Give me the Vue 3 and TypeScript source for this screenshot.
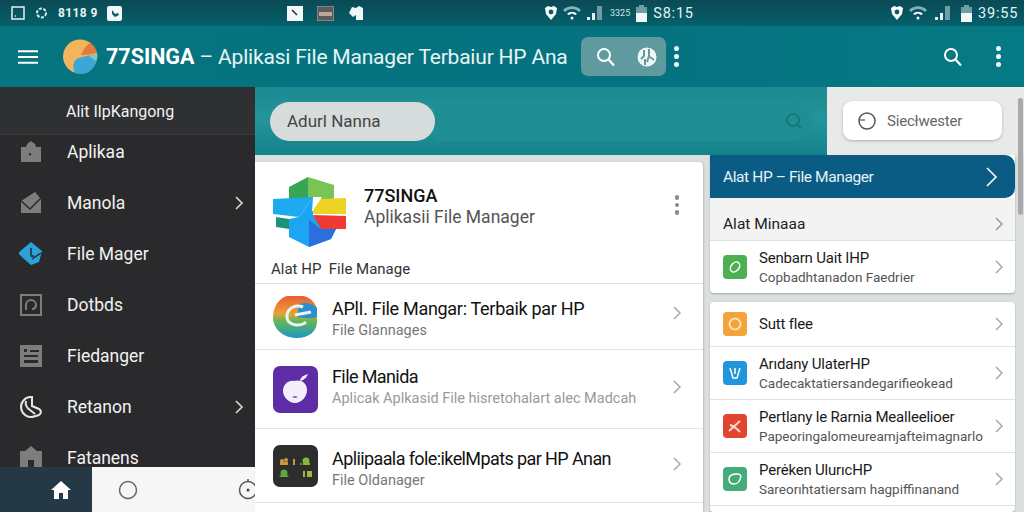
<script setup lang="ts">
interface NavItem { label: string; d: string; cut?: string; color?: string; arrow?: boolean; outline?: boolean; }
interface Row { title: string; sub?: string; color: string; }

const navItems: NavItem[] = [
  { label: 'Aplikaa', d: 'M2 7h5l1-3 4-3 4 3 1 3h5v15H2z M11 13a1.200 1.200 0 1 0 .1 0z' },
  { label: 'Manola', d: 'M2 10 16 1l6 7v14H2z', cut: 'M1 9l10 9L23 6', arrow: true },
  { label: 'File Mager', d: 'M12 0l11 9-3 11-8 3-7-6-6-6z', cut: 'M12 6v8h3M13 17l9-6', color: '#2aa3d8' },
  { label: 'Dotbds', d: 'M1 1h22v22H1z M3 3v18h18V3z M12 6a6 6 0 0 0-6 6v5h2v-5a4 4 0 0 1 8 0c0 2-2 3-3 3v2c3 0 5-2 5-5a6 6 0 0 0-6-6z' },
  { label: 'Fiedanger', d: 'M1 1h22v22H1z M5 5v3h3V5z M11 6v2h9V6z M5 11v2h14v-2z M5 16v3h14v-3z' },
  { label: 'Retanon', d: 'M11 2a10 10 0 1 0 4 19.500l5-1.500c3-2 2-5 0-6l-7-3V2z M7 6c-1 4 1 7 4 9l5 4', color: '#e6e6e6', arrow: true, outline: true },
  { label: 'Fatanens', d: 'M12 0l6 5h5v19H1V5h5z M9 14v10h6V14z' }
];

const mainRows = [
  { title: 'APlI. File Mangar: Terbaik par HP', sub: 'File Glannages', cls: 'row-a' },
  { title: 'File Manida', sub: 'Aplicak Aplkasid File hisretohalart alec Madcah', cls: 'row-b' },
  { title: 'Apliipaala fole:ikelMpats par HP Anan', sub: 'File Oldanager', cls: 'row-c' }
];

const sideTop: Row[] = [
  { title: 'Senbarn Uait IHP', sub: 'Copbadhtanadon Faedrier', color: '#4caf50' }
];
const sideRows: Row[] = [
  { title: 'Sutt flee', color: '#f2a43a' },
  { title: 'Arıdany UlaterHP', sub: 'Cadecaktatiersandegarifieokead', color: '#2196dc' },
  { title: 'Pertlany le Rarnia Mealleelioer', sub: 'Papeoringalomeureamjafteimagnarlo', color: '#e2452f' },
  { title: 'Perėken UlurıcHP', sub: 'Sareorıhtatiersam hagpiffinanand', color: '#45ab78' }
];
</script>

<template>
  <div class="screen">
    <div class="status">
      <div class="st-group st-left">
        <svg width="14" height="14" viewBox="0 0 14 14"><path d="M1 1h12v12H1z M4 10h1" fill="none" stroke="#e6f2f2" stroke-width="1.5"/></svg>
        <svg width="15" height="14" viewBox="0 0 15 14"><circle cx="7.5" cy="7" r="4.5" fill="none" stroke="#d9ecec" stroke-width="2" stroke-dasharray="3 1.5"/></svg>
        <span class="st-text st-narrow">8118 9</span>
        <svg width="15" height="15" viewBox="0 0 15 15"><rect width="15" height="15" rx="2" fill="#eef6f6"/><path d="M5 4v4l3 3 4-2-1-2-3 1z" fill="#0b5b66"/></svg>
      </div>
      <div class="st-group st-center">
        <svg width="16" height="15" viewBox="0 0 16 15"><rect width="16" height="15" fill="#f2f7f7"/><path d="M5 4l5 5" stroke="#333" stroke-width="1.6"/></svg>
        <svg width="17" height="15" viewBox="0 0 17 15"><rect width="17" height="15" fill="#5b5b5b" stroke="#aaa"/><rect x="2" y="6" width="13" height="4" fill="#b9a79f"/></svg>
        <svg width="16" height="16" viewBox="0 0 16 16"><path d="M1 8 4 2l4 1 3-2 4 2v12H8V10l-3 2z" fill="#eef6f6"/></svg>
      </div>
      <div class="st-group st-right1">
        <svg class="alarm" width="12" height="14" viewBox="0 0 12 14"><path d="M0 2l3-2 3 1 3-1 3 2-1 6-5 6-5-6z" fill="#fff"/><circle cx="6" cy="6" r="2.4" fill="#0b5b66"/></svg>
        <svg width="18" height="14" viewBox="0 0 18 14"><path d="M0 4c5-5 13-5 18 0l-2 2C12 2 6 2 2 6z" fill="#7fb4b8"/><path d="M4 8c3-3 7-3 10 0l-2 1c-2-2-4-2-6 0z" fill="#fff"/><circle cx="9" cy="12" r="1.5" fill="#fff"/></svg>
        <svg width="16" height="14" viewBox="0 0 16 14"><path d="M0 14h3v-3H0z M5 14h3V7H5z" fill="#e6f2f2"/><path d="M10 14h5V0h-5z" fill="#6d9ea3"/></svg>
        <span class="st-tiny">3325</span>
        <svg width="11" height="17" viewBox="0 0 11 17"><path d="M3 0h5v2h3v6H0V2h3z" fill="#6d9ea3"/><path d="M0 8h11v9H0z" fill="#f2f7f7"/></svg>
        <span class="st-text st-clock">S8:15</span>
      </div>
      <div class="st-group st-right2">
        <svg class="alarm" width="12" height="14" viewBox="0 0 12 14"><path d="M0 2l3-2 3 1 3-1 3 2-1 6-5 6-5-6z" fill="#fff"/><circle cx="6" cy="6" r="2.4" fill="#0b5b66"/></svg>
        <svg width="18" height="14" viewBox="0 0 18 14"><path d="M0 4c5-5 13-5 18 0l-2 2C12 2 6 2 2 6z" fill="#7fb4b8"/><path d="M4 8c3-3 7-3 10 0l-2 1c-2-2-4-2-6 0z" fill="#fff"/><circle cx="9" cy="12" r="1.5" fill="#fff"/></svg>
        <svg class="sig2" width="16" height="14" viewBox="0 0 16 14"><path d="M0 14h3v-3H0z M5 14h3V7H5z" fill="#e6f2f2"/><path d="M10 14h5V0h-5z" fill="#6d9ea3"/></svg>
        <svg class="bat2" width="11" height="17" viewBox="0 0 11 17"><path d="M3 0h5v2h3v6H0V2h3z" fill="#6d9ea3"/><path d="M0 8h11v9H0z" fill="#f2f7f7"/></svg>
        <span class="st-text st-clock">39:55</span>
      </div>
    </div>

    <header class="appbar">
      <svg class="burger" width="20" height="14" viewBox="0 0 20 14"><path d="M0 1.2h20M0 7h20M0 12.8h20" stroke="#fff" stroke-width="2"/></svg>
      <svg class="brand" width="35" height="35" viewBox="0 0 35 35">
        <circle cx="17" cy="17.500" r="17" fill="#f2b45c"/>
        <path d="M12 34c-3-6-2-13 4-15 6-2 12-3 18-4 1 9-5 20-16 20z" fill="#3aa7d6"/>
        <path d="M18 16c2-5 6-10 9-12 4 2 6 6 7 10-5 1-11 2-16 2z" fill="#e4793a"/>
        <path d="M26 17l8-3c1 3 0 6-1 8z" fill="#86c8b5"/>
      </svg>
      <h1 class="app-title"><b>77SINGA</b> – Aplikasi File Manager Terbaiur HP Ana</h1>
      <div class="chip">
        <svg width="20" height="20" viewBox="0 0 20 20"><circle cx="8" cy="8" r="6" fill="none" stroke="#fff" stroke-width="2"/><path d="M12.500 12.500 18 18.500" stroke="#fff" stroke-width="2.200"/></svg>
        <svg width="20" height="20" viewBox="0 0 20 20"><circle cx="10" cy="10" r="9.500" fill="#f2f7f7"/><path d="M7 3v6l-3 3M12 2v7l-2 6M13 10l4 3M8 12v6" stroke="#5f9a9f" stroke-width="2" fill="none"/></svg>
      </div>
      <span class="dots dots-a"><i></i><i></i><i></i></span>
      <svg class="search-b" width="20" height="20" viewBox="0 0 20 20"><circle cx="8" cy="8" r="6" fill="none" stroke="#fff" stroke-width="2"/><path d="M12.500 12.500 18 18.500" stroke="#fff" stroke-width="2.200"/></svg>
      <span class="dots dots-b"><i></i><i></i><i></i></span>
    </header>

    <div class="body">
      <aside class="sidebar">
        <div class="side-head">Alit IlpKangong</div>
        <ul class="side-list">
          <li v-for="n in navItems" :key="n.label" class="side-item">
            <svg width="24" height="24" viewBox="0 0 24 24">
              <path v-if="n.outline" :d="n.d" fill="none" :stroke="n.color" stroke-width="2"/>
              <path v-else :d="n.d" :fill="n.color || '#7d7d7d'" fill-rule="evenodd"/>
              <path v-if="n.cut" :d="n.cut" fill="none" stroke="#2a2a2c" stroke-width="1.500"/>
            </svg>
            <span class="side-label">{{ n.label }}</span>
            <svg v-if="n.arrow" class="side-arrow" width="9" height="14" viewBox="0 0 9 14"><path d="M1 1l6 6-6 6" fill="none" stroke="#d5d5d5" stroke-width="1.700"/></svg>
          </li>
        </ul>
        <nav class="tabs">
          <div class="tab-home">
            <svg width="20" height="18" viewBox="0 0 20 18"><path d="M10 0 20 9h-3v9h-5v-6H8v6H3V9H0z" fill="#fff"/></svg>
          </div>
          <div class="tab-rest">
            <svg class="tab-circle" width="20" height="20" viewBox="0 0 20 20"><circle cx="10" cy="10" r="8.500" fill="none" stroke="#666" stroke-width="1.500"/></svg>
            <svg class="tab-timer" width="17" height="22" viewBox="0 0 17 22"><circle cx="10" cy="12" r="8.500" fill="none" stroke="#555" stroke-width="1.500"/><circle cx="10" cy="12" r="1.500" fill="#444"/><path d="M10 1v3" stroke="#555" stroke-width="1.500"/></svg>
          </div>
        </nav>
      </aside>

      <main class="content">
        <div class="topband">
          <div class="teal">
            <div class="pill">Adurl Nanna</div>
            <div class="ghost-search">
              <svg width="18" height="18" viewBox="0 0 18 18"><circle cx="8" cy="8" r="6" fill="none" stroke="#17757b" stroke-width="2"/><path d="M12.500 12.500 16 16" stroke="#17757b" stroke-width="2"/></svg>
            </div>
          </div>
          <div class="greyband">
            <div class="sel-card">
              <svg width="20" height="20" viewBox="0 0 20 20"><circle cx="10" cy="10" r="8" fill="none" stroke="#555" stroke-width="1.500"/><path d="M3 9h5" stroke="#555" stroke-width="1.200"/></svg>
              <span>Siecłwester</span>
            </div>
          </div>
        </div>

        <div class="columns">
          <section class="list-col">
            <div class="hero">
              <div class="hero-top">
                <svg class="hero-logo" width="75" height="70" viewBox="0 0 75 70">
                  <path d="M17 10 36 0v22H17z" fill="#37a556"/>
                  <path d="M36 0l26 8v14H36z" fill="#78c455"/>
                  <path d="M4 40l13 2v10L4 50z" fill="#1a9378"/>
                  <path d="M1 22l40-2-14 20L1 37z" fill="#1eaaf0"/>
                  <path d="M47 22l27-1v16H39z" fill="#ecd324"/>
                  <path d="M41 38l33 1v13H47z" fill="#ef3a34"/>
                  <path d="M17 42l10-2 14-20v18l8 14h15l-5 10-22 8-20-10z" fill="#1ca5f2"/>
                  <path d="M37 43l12 9h15l-5 10-22 8z" fill="#2a6fdb"/>
                  <path d="M41 20h9L40 35z" fill="#fff"/>
                </svg>
                <div class="hero-text">
                  <strong>77SINGA</strong>
                  <span>Aplikasii File Manager</span>
                </div>
                <span class="dots dots-grey"><i></i><i></i><i></i></span>
              </div>
              <div class="hero-note">Alat HP&nbsp; File Manage</div>
            </div>

            <div v-for="r in mainRows" :key="r.title" class="main-row" :class="r.cls">
              <svg v-if="r.cls === 'row-a'" class="mi" width="44" height="43" viewBox="0 0 44 43">
                <defs>
                  <linearGradient id="rb" x1="0" y1="0" x2="0" y2="1">
                    <stop offset="0" stop-color="#ea5d34"/><stop offset=".42" stop-color="#e9a23a"/>
                    <stop offset=".58" stop-color="#68b84e"/><stop offset="1" stop-color="#1c97c8"/>
                  </linearGradient>
                </defs>
                <path d="M14 1h16c7 1 13 7 14 14v12c0 9-8 16-20 16C10 43 0 34 0 22 0 12 6 3 14 1z" fill="url(#rb)"/>
                <path d="M26 9c7-2 14-1 18 4v9c-6 2-14 1-20 0z" fill="#2d8fd0"/>
                <path d="M30 12c-7-3-15 1-16 8-1 6 4 10 10 10 4 0 7-1 9-3" fill="none" stroke="#eaf7ee" stroke-width="3"/>
                <path d="M22 20l16-3" stroke="#eaf7ee" stroke-width="3"/>
              </svg>
              <div v-else-if="r.cls === 'row-b'" class="mi mi-purple">
                <svg width="32" height="32" viewBox="0 0 32 32"><path d="M14 8c6-2 13 1 13 9 0 7-6 13-12 13C9 30 3 24 3 18 3 11 9 7 14 8z" fill="#f3eefa"/><path d="M20 7c1-3 4-5 8-6-1 3-3 5-7 7z" fill="#f3eefa"/><path d="M12 24c2-1 4-1 6 0-2 1-4 1-6 0z" fill="#5e2ca5"/></svg>
              </div>
              <div v-else class="mi mi-dark">
                <svg width="45" height="42" viewBox="0 0 45 42">
                  <g fill="#c9973c"><circle cx="9" cy="16" r="2"/><circle cx="13" cy="15" r="2"/><path d="M7 17h8v3H7z"/><path d="M20 14h2v6h-2z"/></g>
                  <g fill="#8ab53c"><circle cx="33" cy="16" r="3.500"/><circle cx="28" cy="19" r="1"/><path d="M30 18h7v2h-7z"/></g>
                  <g fill="#62a63a"><circle cx="11" cy="28" r="3.500"/><path d="M8 30l-2 2h10l-3-3z"/></g>
                  <g fill="#9db83f"><path d="M30 26h2v6h-2zM34 26h5v6h-5z"/></g>
                </svg>
              </div>
              <div class="mt">
                <div class="mt-title">{{ r.title }}</div>
                <div class="mt-sub">{{ r.sub }}</div>
              </div>
              <svg class="chev" width="8" height="14" viewBox="0 0 8 14"><path d="M1 1l6 6-6 6" fill="none" stroke="#a8a8a8" stroke-width="1.500"/></svg>
            </div>
          </section>

          <section class="side-col">
            <div class="card card-top">
              <div class="blue-head">
                <span>Alat HP – File Manager</span>
                <svg width="12" height="20" viewBox="0 0 12 20"><path d="M1 1l9 9-9 9" fill="none" stroke="#fff" stroke-width="1.600"/></svg>
              </div>
              <div class="sub-head">
                <span>Alat Minaaa</span>
                <svg class="chev" width="8" height="14" viewBox="0 0 8 14"><path d="M1 1l6 6-6 6" fill="none" stroke="#999" stroke-width="1.500"/></svg>
              </div>
              <div v-for="r in sideTop" :key="r.title" class="s-row s-row-top">
                <span class="s-ico" :style="{ background: r.color }"><svg width="14" height="14" viewBox="0 0 14 14"><ellipse cx="7" cy="7" rx="4" ry="5.500" transform="rotate(40 7 7)" fill="none" stroke="#fff" stroke-width="1.500"/></svg></span>
                <div class="s-text"><div class="s-title">{{ r.title }}</div><div class="s-sub">{{ r.sub }}</div></div>
                <svg class="chev" width="8" height="14" viewBox="0 0 8 14"><path d="M1 1l6 6-6 6" fill="none" stroke="#a8a8a8" stroke-width="1.500"/></svg>
              </div>
            </div>
            <div class="card card-bottom">
              <div v-for="(r, i) in sideRows" :key="r.title" class="s-row" :class="{ 's-row-short': i === 0 }">
                <span class="s-ico" :style="{ background: r.color }">
                  <svg width="16" height="16" viewBox="0 0 16 16">
                    <circle v-if="i === 0" cx="8" cy="8" r="5.500" fill="none" stroke="#fbe3b5" stroke-width="2"/>
                    <path v-else-if="i === 1" d="M3 3l3 10 4 0 3-10M8 3v6" fill="none" stroke="#fff" stroke-width="1.500"/>
                    <path v-else-if="i === 2" d="M2 13 13 3M3 7c3 0 6 3 10 7" fill="none" stroke="#fbd9d0" stroke-width="2"/>
                    <path v-else d="M2 8c0-4 4-5 8-5 3 0 4 2 4 2-1 6-4 8-7 8-3 0-5-2-5-5z" fill="none" stroke="#fff" stroke-width="1.500"/>
                  </svg>
                </span>
                <div class="s-text"><div class="s-title">{{ r.title }}</div><div v-if="r.sub" class="s-sub">{{ r.sub }}</div></div>
                <svg class="chev" width="8" height="14" viewBox="0 0 8 14"><path d="M1 1l6 6-6 6" fill="none" stroke="#a8a8a8" stroke-width="1.500"/></svg>
              </div>
            </div>
          </section>
        </div>
        <div class="scrollbar"></div>
      </main>
    </div>
  </div>
</template>

<style>
html, body { margin: 0; padding: 0; overflow: hidden; }
</style>

<style scoped>
.screen {
  width: 1024px;
  height: 512px;
  display: flex;
  flex-direction: column;
  overflow: hidden;
  font-family: Roboto, "Liberation Sans", sans-serif;
  background: #dcdfdf;
}

/* status bar */
.status {
  height: 26px;
  flex: none;
  display: flex;
  align-items: center;
  background: linear-gradient(180deg, #0a4a55, #05606b);
  color: #e6f2f2;
}
.st-group { display: flex; align-items: center; }
.st-left { margin-left: 11px; width: 270px; gap: 9px; }
.st-center { margin-left: 6px; width: 258px; gap: 14px; }
.st-right1 { gap: 6px; width: 346px; }
.st-right2 { gap: 6px; }
.st-text { font-size: 14.500px; letter-spacing: .8px; white-space: nowrap; }
.st-narrow { font-size: 12px; font-weight: 700; letter-spacing: .4px; }
.st-tiny { font-size: 9px; color: #cfe4e4; margin-left: 1px; }
.sig2 { margin-left: 2px; }
.bat2 { margin-left: 4px; }

/* app bar */
.appbar {
  height: 61px;
  flex: none;
  display: flex;
  align-items: center;
  background: linear-gradient(90deg, #06757f, #05727f 60%, #067a84);
  color: #fff;
}
.burger { margin-left: 18px; flex: none; }
.brand { margin-left: 25px; flex: none; }
.app-title {
  margin: 0 0 0 8px;
  width: 475px;
  font-size: 21px;
  font-weight: 400;
  letter-spacing: -.2px;
  white-space: nowrap;
  color: #e6f5f5;
}
.app-title b { font-weight: 700; font-size: 21.500px; letter-spacing: 0; color: #fff; }
.chip {
  width: 85px;
  height: 39px;
  box-sizing: border-box;
  padding: 0 9px 0 15px;
  display: flex;
  align-items: center;
  justify-content: space-between;
  background: #5f9a9f;
  border-radius: 7px;
  flex: none;
}
.dots { display: inline-flex; flex-direction: column; gap: 3px; flex: none; }
.dots i { display: block; width: 5px; height: 5px; border-radius: 50%; background: #eef6f6; }
.dots-a { margin-left: 8px; }
.search-b { margin-left: 264px; flex: none; }
.dots-b { margin-left: 33px; }

.body { flex: 1; display: flex; min-height: 0; }

/* sidebar */
.sidebar {
  width: 255px;
  flex: none;
  display: flex;
  flex-direction: column;
  background: #2a2a2c;
  color: #f2f2f2;
}
.side-head {
  height: 48px;
  flex: none;
  box-sizing: border-box;
  padding: 15px 0 0 66px;
  font-size: 16px;
  background: #2f3032;
  border-bottom: 1px solid #3a3b3d;
}
.side-list {
  flex: 1;
  min-height: 0;
  overflow: hidden;
  margin: -9px 0 0;
  padding: 0;
  list-style: none;
}
.side-item {
  height: 51px;
  display: flex;
  align-items: center;
  padding-left: 19px;
  position: relative;
}
.side-label { margin-left: 24px; font-size: 17.500px; }
.side-arrow { position: absolute; right: 11px; top: 19px; }
.tabs { height: 45px; flex: none; display: flex; }
.tab-home {
  width: 92px;
  display: flex;
  align-items: center;
  justify-content: center;
  padding-left: 30px;
  box-sizing: border-box;
  background: #243845;
}
.tab-rest {
  flex: 1;
  display: flex;
  align-items: center;
  background: #f6f6f6;
  overflow: hidden;
}
.tab-circle { margin-left: 26px; }
.tab-timer { margin-left: 100px; margin-top: -2px; }

/* main */
.content { flex: 1; min-width: 0; display: flex; flex-direction: column; position: relative; }
.topband { height: 68px; flex: none; display: flex; }
.teal {
  width: 572px;
  display: flex;
  align-items: center;
  padding-left: 15px;
  box-sizing: border-box;
  background: linear-gradient(180deg, #1c8a90, #23959a 50%, #148389);
}
.pill {
  width: 165px;
  height: 39px;
  box-sizing: border-box;
  padding-left: 17px;
  line-height: 39px;
  border-radius: 20px;
  background: #d6dcdc;
  color: #444;
  font-size: 17px;
  flex: none;
}
.ghost-search {
  width: 377px;
  height: 39px;
  display: flex;
  align-items: center;
  justify-content: flex-end;
  box-sizing: border-box;
  padding-right: 9px;
  background: #1f8f93;
  border-radius: 0 20px 20px 0;
}
.greyband { flex: 1; background: #e8e9e9; padding: 14px 0 0 16px; }
.sel-card {
  width: 159px;
  height: 39px;
  display: flex;
  align-items: center;
  gap: 10px;
  box-sizing: border-box;
  padding-left: 14px;
  background: #fff;
  border-radius: 9px;
  box-shadow: 0 1px 3px rgba(0, 0, 0, .25);
  color: #666;
  font-size: 15px;
  letter-spacing: -.2px;
}

.columns { flex: 1; min-height: 0; display: flex; }
.list-col {
  width: 448px;
  flex: none;
  margin-top: 7px;
  background: #fff;
  border-radius: 0 4px 0 0;
  box-shadow: 1px 0 2px rgba(0, 0, 0, .15);
}
.hero { height: 122px; box-sizing: border-box; border-bottom: 1px solid #dfdfdf; }
.hero-top { height: 92px; display: flex; align-items: center; padding-left: 17px; position: relative; }
.hero-logo { flex: none; margin-top: 8px; }
.hero-text { margin-left: 17px; display: flex; flex-direction: column; margin-top: -5px; }
.hero-text strong { font-size: 18px; font-weight: 500; color: #111; line-height: 23px; }
.hero-text span { font-size: 17.500px; color: #555; line-height: 21px; }
.dots-grey { position: absolute; right: 24px; top: 33px; gap: 3px; }
.dots-grey i { width: 4.500px; height: 4.500px; background: #8a8a8a; }
.hero-note { padding: 6px 0 0 16px; font-size: 15px; color: #333; }

.main-row {
  display: flex;
  align-items: center;
  padding: 0 22px 0 18px;
  box-sizing: border-box;
  border-bottom: 1px solid #e3e3e3;
}
.row-a { height: 66px; }
.row-b { height: 79px; }
.row-c { height: 74px; }
.mi { width: 45px; height: 47px; flex: none; border-radius: 7px; }
.row-a .mi { width: 44px; height: 43px; border-radius: 0; }
.mi-purple { background: #5e2ca5; display: flex; align-items: center; justify-content: center; }
.mi-dark { height: 42px; background: #2c2d2c; overflow: hidden; }
.mi-dark svg { display: block; }
.mt { flex: 1; margin-left: 14px; min-width: 0; }
.row-a .mt { margin-left: 15px; margin-top: 3px; }
.row-b .mt { margin-top: -6px; }
.row-c .mt { margin-top: 6px; }
.mt-title { font-size: 18px; color: #111; line-height: 24px; white-space: nowrap; letter-spacing: -.6px; }
.row-a .mt-title { letter-spacing: -.3px; }
.mt-sub { font-size: 14.500px; color: #777; line-height: 19px; white-space: nowrap; }
.row-b .mt-sub { color: #999; font-size: 14.500px; }
.chev { flex: none; }
.main-row .chev { margin-bottom: 4px; }
.row-a .chev { margin-bottom: 8px; }

.side-col {
  width: 305px;
  flex: none;
  margin-left: 7px;
  display: flex;
  flex-direction: column;
  gap: 9px;
}
.card { background: #fff; border-radius: 0 0 4px 4px; box-shadow: 0 1px 2px rgba(0, 0, 0, .25); }
.blue-head {
  height: 43px;
  display: flex;
  align-items: center;
  justify-content: space-between;
  box-sizing: border-box;
  padding: 0 17px 0 13px;
  background: #0a5c84;
  border-radius: 0 10px 10px 0;
  color: #e6f3f7;
  font-size: 15.500px;
  letter-spacing: -.4px;
}
.sub-head {
  height: 43px;
  display: flex;
  align-items: center;
  justify-content: space-between;
  box-sizing: border-box;
  padding: 10px 12px 0 13px;
  background: #f3f3f3;
  border-bottom: 1px solid #dedede;
  color: #222;
  font-size: 15.500px;
}
.s-row {
  height: 53px;
  display: flex;
  align-items: center;
  box-sizing: border-box;
  padding: 0 12px 0 13px;
  border-bottom: 1px solid #e2e2e2;
}
.s-row-top { height: 52px; border-bottom: none; }
.s-row-short { height: 45px; }
.card-bottom { border-radius: 4px; flex: 1; }
.s-ico {
  width: 24px;
  height: 24px;
  flex: none;
  border-radius: 4px;
  display: flex;
  align-items: center;
  justify-content: center;
}
.s-text { flex: 1; margin-left: 12px; min-width: 0; }
.s-title { font-size: 15px; line-height: 20px; color: #1a1a1a; white-space: nowrap; letter-spacing: -.2px; }
.s-sub { font-size: 13.500px; line-height: 18px; color: #555; white-space: nowrap; overflow: hidden; }
.scrollbar {
  position: absolute;
  right: 1px;
  top: 11px;
  width: 5px;
  height: 117px;
  border-radius: 3px;
  background: #a9a9a9;
}
</style>
